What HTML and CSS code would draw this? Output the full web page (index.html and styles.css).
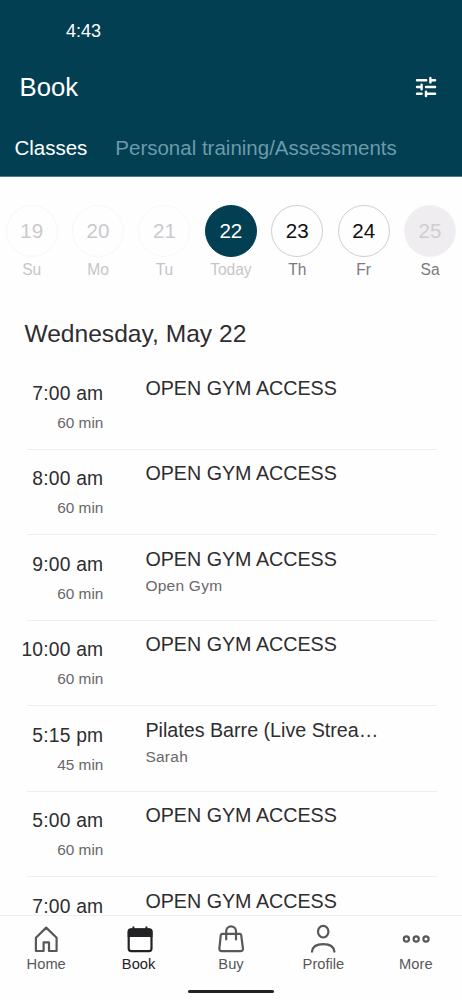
FILE: index.html
```html
<!DOCTYPE html>
<html lang="en">
<head>
<meta charset="utf-8">
<title>Book</title>
<link rel="stylesheet" href="styles.css">
</head>
<body>
<div class="app">
  <header class="header">
    <div class="status">4:43</div>
    <div class="titlebar">
      <h1 class="title">Book</h1>
      <svg class="filter" viewBox="0 0 22 22" width="22" height="22" fill="none" stroke="currentColor" stroke-width="2.4" stroke-linecap="round">
        <path d="M2 4.2H11.2M15.4 4.2H20.1M15.4 2V6.4M2 11H6.4M6.6 8.8V13.2M11 11H20.1M2 17.8H6.6M11 17.8H20.1M11 15.6V20"/>
      </svg>
    </div>
    <nav class="tabs">
      <span class="tab active">Classes</span>
      <span class="tab">Personal training/Assessments</span>
    </nav>
  </header>
  <section class="days">
    <div class="day past"><span class="num">19</span><span class="name">Su</span></div>
    <div class="day past"><span class="num">20</span><span class="name">Mo</span></div>
    <div class="day past"><span class="num">21</span><span class="name">Tu</span></div>
    <div class="day today"><span class="num">22</span><span class="name">Today</span></div>
    <div class="day"><span class="num">23</span><span class="name">Th</span></div>
    <div class="day"><span class="num">24</span><span class="name">Fr</span></div>
    <div class="day closed"><span class="num">25</span><span class="name">Sa</span></div>
  </section>
  <main class="schedule">
    <h2 class="date">Wednesday, May 22</h2>
    <div class="row"><div class="when"><span class="time">7:00 am</span><span class="length">60 min</span></div><div class="what"><span class="class">OPEN GYM ACCESS</span></div></div>
    <div class="row"><div class="when"><span class="time">8:00 am</span><span class="length">60 min</span></div><div class="what"><span class="class">OPEN GYM ACCESS</span></div></div>
    <div class="row"><div class="when"><span class="time">9:00 am</span><span class="length">60 min</span></div><div class="what"><span class="class">OPEN GYM ACCESS</span><span class="staff">Open Gym</span></div></div>
    <div class="row"><div class="when"><span class="time">10:00 am</span><span class="length">60 min</span></div><div class="what"><span class="class">OPEN GYM ACCESS</span></div></div>
    <div class="row"><div class="when"><span class="time">5:15 pm</span><span class="length">45 min</span></div><div class="what"><span class="class">Pilates Barre (Live Strea…</span><span class="staff">Sarah</span></div></div>
    <div class="row"><div class="when"><span class="time">5:00 am</span><span class="length">60 min</span></div><div class="what"><span class="class">OPEN GYM ACCESS</span></div></div>
    <div class="row last"><div class="when"><span class="time">7:00 am</span></div><div class="what"><span class="class">OPEN GYM ACCESS</span></div></div>
  </main>
  <footer class="footer">
    <nav class="navbar">
      <div class="item">
        <svg viewBox="0 0 30 30" width="30" height="30"><path d="M4.9 27V13.8L15.2 3.6 25.6 13.8V27H18V18.4H12.6V27Z"/></svg>
        <span>Home</span>
      </div>
      <div class="item current">
        <svg viewBox="0 0 30 30" width="30" height="30"><rect x="4.7" y="5.4" width="22.8" height="21.8" rx="2.6"/><path class="solid" d="M3.7 13V7.5Q3.7 4.5 6.7 4.5H8.4V2.5H10.4V4.5H21.4V2.5H23.4V4.5H25.5Q28.5 4.5 28.5 7.5V13Z"/></svg>
        <span>Book</span>
      </div>
      <div class="item">
        <svg viewBox="0 0 30 30" width="30" height="30"><path d="M6.4 9.8H23.6Q25 9.8 25.2 11.2L26.9 24.2Q27.2 27.2 24.4 27.2H5.9Q3.1 27.2 3.4 24.2L4.8 11.2Q5 9.8 6.4 9.8ZM10.2 15.4V7.2A4.9 4.9 0 0 1 20 7.2V15.4"/></svg>
        <span>Buy</span>
      </div>
      <div class="item">
        <svg viewBox="0 0 30 30" width="30" height="30"><ellipse cx="15.2" cy="7.7" rx="5.2" ry="5.8"/><path d="M4 27.6C4.5 22.5 9 20.1 15.2 20.1S25.9 22.5 26.4 27.6"/></svg>
        <span>Profile</span>
      </div>
      <div class="item">
        <svg viewBox="0 0 30 30" width="30" height="30"><circle cx="5.4" cy="15" r="2.6"/><circle cx="15.2" cy="15" r="2.6"/><circle cx="25" cy="15" r="2.6"/></svg>
        <span>More</span>
      </div>
    </nav>
    <div class="handle"></div>
  </footer>
</div>
</body>
</html>
```

FILE: styles.css
```css
* { box-sizing: border-box; }
body { margin: 0; background: #fefefe; font-family: "Liberation Sans", Arial, sans-serif; color: #2e2d2f; }
.app { width: 462px; height: 1000px; overflow: hidden; display: flex; flex-direction: column; background: #fefefe; }

.header { flex: none; height: 177px; background: #033f52; color: #fff; border-bottom: 1px solid #4c7888; }
.status { padding: 21px 0 0 66px; font-size: 18px; line-height: 20px; }
.titlebar { display: flex; justify-content: space-between; align-items: center; height: 30px; margin-top: 31px; padding: 0 25px 0 19.6px; }
.title { margin: 0; font-size: 25.7px; font-weight: 400; line-height: 30px; }
.tabs { display: flex; gap: 28px; margin-top: 34px; padding-left: 14.4px; font-size: 20.5px; line-height: 24px; }
.tab { color: #6c9aab; white-space: nowrap; }
.tab.active { color: #fff; }

.days { flex: none; display: flex; padding: 28px 0 0 5.7px; gap: 14.4px; }
.day { flex: none; width: 52px; display: flex; flex-direction: column; align-items: center; }
.num { width: 52px; height: 52px; border: 1px solid #d0cfd1; border-radius: 50%; font-size: 20.6px; line-height: 50px; text-align: center; color: #111012; }
.name { margin-top: 4px; font-size: 15.6px; line-height: 18px; letter-spacing: -0.05px; color: #7c7a7d; }
.past .num { border-color: #f8f7f8; color: #cbc9cc; }
.past .name, .today .name { color: #c7c5c8; }
.today .num { background: #033f52; border-color: #033f52; color: #fff; }
.closed .num { background: #efedf0; border-color: #f3f1f4; color: #cfcdd0; }

.schedule { flex: 1; min-height: 0; overflow: hidden; padding: 40px 25px 0 24.4px; }
.date { margin: 0 0 15px; font-size: 24.6px; font-weight: 400; line-height: 30px; }
.row { display: flex; height: 85.5px; gap: 42px; border-bottom: 1px solid #eeedef; margin-left: 3px; }
.row.last { height: auto; border-bottom: 0; }
.when { width: 78px; margin-left: -2px; flex: none; display: flex; flex-direction: column; align-items: flex-end; padding-top: 17.5px; white-space: nowrap; }
.time { font-size: 19.3px; line-height: 24px; letter-spacing: 0.2px; }
.length { margin-top: 8px; font-size: 15.4px; line-height: 18px; color: #69676a; }
.what { display: flex; flex-direction: column; padding-top: 11.5px; white-space: nowrap; }
.class { font-size: 19.7px; line-height: 24px; }
.staff { margin-top: 6.5px; font-size: 15.5px; line-height: 18px; letter-spacing: 0.25px; color: #69676a; }

.footer { flex: none; height: 85px; border-top: 1px solid #eeedef; background: #fefefe; }
.navbar { display: flex; padding-top: 8px; }
.item { flex: 1; display: flex; flex-direction: column; align-items: center; font-size: 14.7px; line-height: 18px; color: #58575a; }
.item svg { fill: none; stroke: #58575a; stroke-width: 2.2; stroke-linejoin: round; stroke-linecap: round; }
.item span { margin-top: 1px; }
.item.current { color: #232225; }
.item.current svg { stroke: #232225; }
.item .solid { fill: #232225; stroke: none; }
.handle { width: 86px; height: 3px; margin: 17px auto 0; border-radius: 2px; background: #232225; }
```
